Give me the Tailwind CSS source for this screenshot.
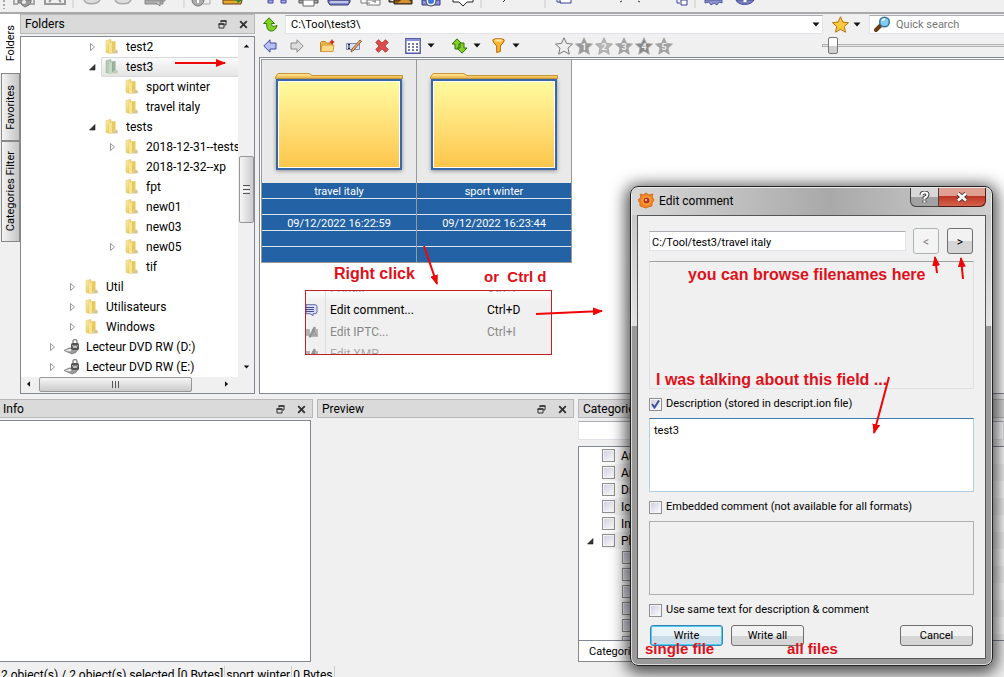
<!DOCTYPE html>
<html lang="en">
  <head>
    <meta charset="UTF-8" />
    <meta name="viewport" content="width=device-width, initial-scale=1.0" />
    <script src="https://cdn.jsdelivr.net/npm/@tailwindcss/browser@4"></script>
    <title>Edit comment</title>
  </head>
  <body class="relative flex h-screen flex-col overflow-hidden bg-[#f0f0f0] font-[Roboto,sans-serif] text-xs text-black">
    <!-- shared symbols -->
    <svg class="absolute size-0">
      <defs>
        <linearGradient id="gold" x1="0" y1="0" x2="1" y2="1">
          <stop offset="0" stop-color="#fff3b4" />
          <stop offset="1" stop-color="#e2b840" />
        </linearGradient>
        <linearGradient id="tab" x1="0" y1="0" x2="0" y2="1">
          <stop offset="0" stop-color="#ffe9a0" />
          <stop offset="1" stop-color="#f0b440" />
        </linearGradient>
        <symbol id="folder" viewBox="0 0 16 16">
          <path d="M2 1.500 7 .5v14l-5-1z" fill="url(#gold)" stroke="#dcc067" stroke-width=".5" />
          <path d="M7 2.500 11.500 2v9L7 14.500z" fill="#e8c95e" />
          <path d="M5 4 8 3v12l-3-1z" fill="#f8e48e" />
          <path d="M8 13.500 12 10.500l2 1.500-.5 2.500H8z" fill="#d6c79a" />
        </symbol>
        <symbol id="folder-open" viewBox="0 0 16 16">
          <path d="M2 1.500 7 .5v14l-5-1z" fill="#b4cdbb" stroke="#8fae9c" stroke-width=".5" />
          <path d="M7 2.500 11.500 2v9L7 14.500z" fill="#95b09b" />
          <path d="M5 4 8 3v12l-3-1z" fill="#c5d8c0" />
          <path d="M8 13.500 12 10.500l2 1.500-.5 2.500H8z" fill="#c3cbb9" />
        </symbol>
        <symbol id="drive" viewBox="0 0 16 16">
          <path d="M0 11.500 5 9h10l-3 4.500-4 1.500z" fill="#9b9b9b" stroke="#666" stroke-width=".6" />
          <path d="M1 11.700 5 10h4l-3 2.500z" fill="#e8e8e8" />
          <rect x="7" y="4" width="8" height="7" rx="1.500" fill="#555" />
          <path d="M9 4V2.500a2 2 0 0 1 4 0V4" fill="none" stroke="#888" stroke-width="1.400" />
          <path d="m8.500 6 1.500 3 1-2.500 1 2.500 1.500-3" fill="none" stroke="#ddd" stroke-width=".9" />
        </symbol>
        <symbol id="closed" viewBox="0 0 10 10">
          <path d="M3.500 1.500v7L7.500 5z" fill="#fff" stroke="#999" />
        </symbol>
        <symbol id="opened" viewBox="0 0 10 10">
          <path d="M8 2.500v5.500H2.500z" fill="#333" stroke="#222" stroke-width=".6" />
        </symbol>
        <symbol id="caret" viewBox="0 0 8 5">
          <path d="M.5.5h7L4 4.500z" fill="#111" />
        </symbol>
        <symbol id="restore" viewBox="0 0 9 9">
          <path d="M3 2.500V1h5v4H6.500M1 4h5v4H1z" fill="none" stroke="#333" />
          <path d="M2.500 1h6M.5 4h6" stroke="#333" stroke-width="1.600" />
        </symbol>
        <symbol id="close" viewBox="0 0 9 9">
          <path d="m1.200 1.200 6.600 6.600M7.800 1.200 1.200 7.800" stroke="#333" stroke-width="1.900" />
        </symbol>
        <symbol id="star" viewBox="0 0 18 18">
          <path d="m9 .8 2.500 5.600 6 .7-4.500 4 1.300 6.100L9 14.100l-5.300 3.100L5 11.100l-4.500-4 6-.7z" />
        </symbol>
        <symbol id="pencil" viewBox="0 0 12 12">
          <path d="M0 3h4v7H0zM6 3h6v8H6z" fill="#b5b5b5" />
          <path d="M3 11 8 1l1.500.8L5 11zM8 5l3 4M7 9h4" fill="#999" stroke="#888" stroke-width=".8" />
        </symbol>
        <marker id="head" viewBox="0 0 10 8" refX="9" refY="4" markerWidth="10" markerHeight="8" markerUnits="userSpaceOnUse" orient="auto">
          <path d="M0 0 10 4 0 8z" fill="#f00606" stroke="none" />
        </marker>
      </defs>
    </svg>

    <!-- main toolbar, scrolled so that only its lower edge is in view -->
    <header class="h-[14px] shrink-0 overflow-hidden border-b border-[#aaa] bg-[#f0f0f0]">
      <div class="h-[13px] border-b border-[#aaa]">
        <svg class="h-[9px] w-[760px]" viewBox="0 0 760 9" fill="none">
          <path d="M4 0v9" stroke="#aaa" stroke-width="2" stroke-dasharray="2 2" />
          <path d="M14 0v4h4M30 4h4V0" stroke="#aaa" stroke-width="2" />
          <path d="M18 3h3l1 2 3 2 4-2 2-3V0H18z" fill="#999" stroke="#777" /><circle cx="24" cy="2" r="2" fill="#eee" />
          <path d="M45 0v4h20V0M49 2l2-2M61 2l-2-2" stroke="#999" stroke-width="2" />
          <path d="M73 0v8M184 0v8M481 0v8M545 0v8M695 0v8" stroke="#ccc" />
          <path d="M84 0c2 5 13 5 16 0M115 0c2 5 14 5 16 0" fill="#ddd" stroke="#aaa" stroke-width="1.500" />
          <path d="M145 0v4h18V0z" fill="#aaa" stroke="#888" /><path d="m156 3 4 3V1h5V0" fill="#ccc" stroke="#888" />
          <circle cx="198" cy="0" r="6" fill="#aaa" stroke="#777" /><path d="M198 0v3" stroke="#fff" stroke-width="2" /><path d="M203 4h7V0" stroke="#aaa" />
          <path d="M223 0v4h18l1-4z" fill="#e9a82c" stroke="#63410e" /><path d="m236 0 2 3 4-3" fill="#218a35" />
          <path d="M268 0v3h5V0zM281 0v3h5V0z" fill="#a4a9ef" stroke="#444a9b" />
          <path d="M299 0v3h19V0z" fill="#aaa" stroke="#555" /><path d="M303 0v6h11V0z" fill="#fff" stroke="#666" />
          <path d="M328 0v2l2 3h18l2-3V0z" fill="#8188cc" stroke="#333970" /><path d="M330 2h18" stroke="#fff" />
          <path d="M361 0v3h9M367 0v5h13V0z" fill="#fff" stroke="#777" /><path d="m371 1 5-1v3z" fill="#999" />
          <path d="M389 0v2h6M394 0v4h18V0z" fill="#965a16" stroke="#222" /><path d="m398 3 3-3h8l2 3z" fill="#d5902f" />
          <path d="M422 0v5h18V0z" fill="#8e94db" stroke="#333976" /><circle cx="431" cy="1" r="5" fill="#fff" stroke="#333976" /><circle cx="431" cy="1" r="3" fill="#3878df" />
          <path d="M453 0v2h6l4 4 4-4h6V0" fill="#fff" stroke="#222" />
          <path d="m505 0-2 2M622 1l-2 1M638 1l2 1" stroke="#333" />
          <path d="M557 0v2h4M560 0v3h11V0" fill="#fff" stroke="#3b419b" />
          <path d="M677 0v3h3M681 0v5h6V0z" fill="#fff" stroke="#3b419b" />
          <path d="M705 0v3l4-1 2 3 3-2 3 2 2-3 3 1V0z" fill="#8e91cf" stroke="#555a9e" />
          <path d="M736 0c2 6 15 6 18 0z" fill="#7a7ec4" stroke="#484c93" /><path d="M745 0v2" stroke="#fff" stroke-width="3" />
        </svg>
      </div>
    </header>

    <main class="flex h-[380px] shrink-0">
      <!-- side tabs -->
      <nav class="flex w-5 shrink-0 flex-col items-end text-[11px]">
        <button class="flex h-[59px] w-5 items-center justify-center bg-white pl-[2px]"><span class="rotate-180 [writing-mode:vertical-rl]">Folders</span></button>
        <button class="flex h-[68px] w-[19px] items-center justify-center border border-[#888] bg-linear-to-r from-[#f4f4f4] to-[#c4c4c4] pl-[2px]"><span class="rotate-180 [writing-mode:vertical-rl]">Favorites</span></button>
        <button class="flex h-[101px] w-[19px] items-center justify-center border border-[#888] bg-linear-to-r from-[#f4f4f4] to-[#c4c4c4] pl-[2px]"><span class="rotate-180 [writing-mode:vertical-rl]">Categories Filter</span></button>
      </nav>

      <!-- folder tree -->
      <section class="flex w-[235px] shrink-0 flex-col gap-[2px]">
        <div class="flex h-5 shrink-0 items-center gap-3 border border-[#b8b8b8] bg-[#dadada] pr-[6px] pl-1">
          <h2 class="grow">Folders</h2>
          <button aria-label="Float"><svg class="size-[9px]"><use href="#restore" /></svg></button>
          <button aria-label="Close"><svg class="size-[9px]"><use href="#close" /></svg></button>
        </div>
        <div class="flex min-h-0 grow flex-col border border-[#828790] bg-white">
          <div class="flex min-h-0 grow">
            <ul id="folder-tree" class="min-w-0 grow overflow-hidden"></ul>
            <div class="flex w-4 shrink-0 flex-col items-center bg-[#f0f0f0] pt-[7px] pb-2">
              <svg class="h-[4px] w-[7px] rotate-180"><use href="#caret" /></svg>
              <div class="mt-[108px] flex h-[67px] w-[15px] flex-col items-center justify-center gap-px rounded-xs border border-[#979797] bg-linear-to-r from-[#f6f6f6] to-[#cbcbcb]">
                <i class="h-px w-[7px] bg-[#555]"></i><i class="h-px w-[7px] bg-white"></i><i class="h-px w-[7px] bg-[#555]"></i><i class="h-px w-[7px] bg-white"></i><i class="h-px w-[7px] bg-[#555]"></i>
              </div>
              <svg class="mt-auto h-[4px] w-[7px]"><use href="#caret" /></svg>
            </div>
          </div>
          <div class="flex h-4 shrink-0 items-start bg-[#f0f0f0] pr-6 pl-1">
            <svg class="mt-[5px] h-[4px] w-[7px] rotate-90"><use href="#caret" /></svg>
            <div class="ml-[7px] flex h-[15px] w-[153px] items-center justify-center gap-[2px] rounded-xs border border-[#979797] bg-linear-to-b from-[#f6f6f6] to-[#cbcbcb]">
              <i class="h-[7px] w-px bg-[#555]"></i><i class="h-[7px] w-px bg-[#555]"></i><i class="h-[7px] w-px bg-[#555]"></i>
            </div>
            <svg class="mt-[5px] ml-auto h-[4px] w-[7px] -rotate-90"><use href="#caret" /></svg>
          </div>
        </div>
      </section>

      <!-- browser -->
      <section class="ml-1 flex min-w-0 grow flex-col">
        <div class="flex h-5 shrink-0 items-center">
          <button class="ml-1 shrink-0" aria-label="Up"><svg class="size-[15px]" viewBox="0 0 15 15"><path d="M.5 6.500 6 .8l5.500 5.700H8.500c0 3 2 3.500 5.500 2-1 4-3.500 5.700-6 5.500-3.500-.3-4.500-3-4.300-7.500z" fill="#7ed321" stroke="#35780c" /></svg></button>
          <div class="ml-[7px] flex h-[19px] min-w-0 grow items-center border border-[#e2e3ea] border-t-[#abadb3] bg-white pr-[2px]">
            <input class="min-w-0 grow pt-[2px] pl-[5px] text-[11px] outline-none" aria-label="Path" value="C:\Tool\test3\" />
            <button aria-label="History"><svg class="h-[5px] w-2"><use href="#caret" /></svg></button>
          </div>
          <button class="ml-[9px] flex shrink-0 items-center gap-1" aria-label="Favorites">
            <svg class="size-[17px]" fill="#ffc93c" stroke="#b36b0b" viewBox="0 0 18 18"><use href="#star" /></svg>
            <svg class="h-[5px] w-2"><use href="#caret" /></svg>
          </button>
          <div class="ml-2 flex h-[19px] w-[135px] shrink-0 items-center gap-[5px] border border-r-0 border-[#e2e3ea] border-t-[#abadb3] bg-white pl-1">
            <svg class="size-[17px] shrink-0" viewBox="0 0 17 17"><path d="m2 14 5-5" stroke="#6b3b16" stroke-width="4" stroke-linecap="round" /><circle cx="10.500" cy="6" r="4.800" fill="#80cdf4" stroke="#38729c" stroke-width="1.500" /><path d="M8 5q1-2 3-2" stroke="#fff" stroke-width="1.500" fill="none" /></svg>
            <input class="min-w-0 grow pt-[2px] text-[11px] outline-none placeholder:text-[#777]" aria-label="Quick search" placeholder="Quick search" />
          </div>
        </div>

        <div class="flex h-[23px] shrink-0 items-center pl-1">
          <button aria-label="Back"><svg class="size-[14px]" viewBox="0 0 14 14"><path d="M.8 7 7 .8V4h6v6H7v3.200z" fill="#b8bff3" stroke="#4349a2" /></svg></button>
          <button class="ml-[13px]" aria-label="Forward"><svg class="size-[14px]" viewBox="0 0 14 14"><path d="M13.200 7 7 .8V4H1v6h6v3.200z" fill="#ddd" stroke="#888" /></svg></button>
          <button class="ml-4" aria-label="New folder"><svg class="h-[14px] w-[15px]" viewBox="0 0 15 14"><path d="M.5 12.500v-9l1-1h4l1 1.500h6v8.500z" fill="#f2b64a" stroke="#c08529" /><path d="M1 12.500 2 6h12l-1 6.500z" fill="#ffda87" stroke="#d49a3b" /><path d="m12 0 1 2 2 1-2 1-1 2-1-2-2-1 2-1z" fill="#d3261b" /></svg></button>
          <button class="ml-[11px]" aria-label="Rename"><svg class="h-[14px] w-4" viewBox="0 0 16 14"><path d="M.5 4.500h13v6H.5z" fill="#dce1fa" stroke="#8388bd" /><path d="M3 5.500v4M2 5.500h2M2 9.500h2" stroke="#222" /><path d="m5 13 1-3 8-9 1.500 1.200L8 11z" fill="#efad5b" stroke="#784819" stroke-width=".8" /></svg></button>
          <button class="ml-[13px]" aria-label="Delete"><svg class="size-[14px]" viewBox="0 0 14 14"><path d="m3.500.8 3.500 3.400L10.500.8l2.700 2.700L9.800 7l3.400 3.500-2.700 2.700L7 9.800l-3.500 3.400-2.700-2.700L4.200 7 .8 3.500z" fill="#df4b4b" stroke="#b23a3a" /></svg></button>
          <button class="ml-4 flex items-center gap-[6px]" aria-label="View"><svg class="size-4" viewBox="0 0 16 16"><path d="M.8.8h14.400v14.400H.8z" fill="#fff" stroke="#555aa7" stroke-width="1.400" /><path d="M1 2h14" stroke="#8c91d8" stroke-width="2" /><path d="M3 6h10M3 9h10M3 12h10" stroke="#4a4e8f" stroke-width="1.600" stroke-dasharray="2 2" /></svg><svg class="h-[5px] w-2"><use href="#caret" /></svg></button>
          <button class="ml-4 flex items-center gap-[5px]" aria-label="Sort"><svg class="h-4 w-[17px]" viewBox="0 0 17 16"><path d="M6 .8 11 6H8v5H4V6H1z" fill="#80d122" stroke="#356f10" /><path d="M11 15.200 16 10h-3V5H9v5H6z" fill="#80d122" stroke="#356f10" /></svg><svg class="h-[5px] w-2"><use href="#caret" /></svg></button>
          <button class="ml-[11px] flex items-center gap-[7px]" aria-label="Filter"><svg class="h-[15px] w-[13px]" viewBox="0 0 13 15"><path d="M.7 2q0-1.300 5.800-1.300T12.300 2q0 2-4 6v5.500l-3.600 1V8Q.7 4 .7 2z" fill="#ffb62e" stroke="#b36410" /><ellipse cx="6.500" cy="2.400" rx="4.200" ry="1.200" fill="#ffe39b" /></svg><svg class="h-[5px] w-2"><use href="#caret" /></svg></button>
          <div id="ratings" class="ml-[35px] flex gap-[2px]"></div>
          <div class="relative ml-auto flex h-[18px] w-[182px] items-center">
            <i class="h-[3px] w-full border border-r-0 border-[#b0b0b0] bg-[#e7e7e7]"></i>
            <input type="range" class="absolute inset-0 h-full w-full opacity-0" aria-label="Thumbnail size" value="3" />
            <i class="pointer-events-none absolute left-[6px] h-[17px] w-[10px] rounded-xs border border-[#777] bg-linear-to-b from-white from-50% to-[#d0d0d0] to-50%"></i>
          </div>
        </div>

        <div class="min-h-0 grow border border-r-0 border-[#828790] bg-white pt-px pl-px">
          <div id="thumbs" class="flex border-t border-l border-[#999]"></div>
        </div>
      </section>
    </main>

    <!-- lower panels -->
    <div class="mt-[5px] flex min-h-0 grow gap-1">
      <section class="flex w-[313px] shrink-0 flex-col gap-[2px]">
        <div class="flex h-[19px] shrink-0 items-center gap-3 border border-l-0 border-[#b8b8b8] bg-[#dadada] pt-px pr-[6px] pl-[3px]">
          <h2 class="grow">Info</h2>
          <button aria-label="Float"><svg class="size-[9px]"><use href="#restore" /></svg></button>
          <button aria-label="Close"><svg class="size-[9px]"><use href="#close" /></svg></button>
        </div>
        <div class="mr-[2px] grow border border-l-0 border-[#828790] bg-white"></div>
      </section>
      <section class="w-[257px] shrink-0">
        <div class="flex h-[19px] items-center gap-3 border border-[#b8b8b8] bg-[#dadada] pt-px pr-[6px] pl-1">
          <h2 class="grow">Preview</h2>
          <button aria-label="Float"><svg class="size-[9px]"><use href="#restore" /></svg></button>
          <button aria-label="Close"><svg class="size-[9px]"><use href="#close" /></svg></button>
        </div>
      </section>
      <section class="flex min-w-0 grow flex-col">
        <h2 class="flex h-[19px] shrink-0 items-center border border-r-0 border-[#b8b8b8] bg-[#dadada] pt-px pl-1">Categories</h2>
        <input class="mt-[3px] h-[19px] shrink-0 border border-[#e2e3ea] border-t-[#abadb3] bg-white outline-none" aria-label="Filter categories" />
        <ul id="categories" class="mt-[6px] min-h-0 grow overflow-hidden border border-r-0 border-[#828790] bg-white"></ul>
        <button class="flex h-[21px] w-24 shrink-0 items-center border border-t-0 border-[#888] bg-white pt-[2px] pl-[10px] text-[11px]">Categories</button>
      </section>
    </div>

    <footer class="mt-1 flex h-[11px] shrink-0 items-start overflow-hidden text-xs leading-[18px] whitespace-nowrap">
      <span class="border-r border-[#ccc] pr-px pl-px">2 object(s) / 2 object(s) selected [0 Bytes]</span>
      <span class="border-r border-[#ccc] px-px">sport winter</span>
      <span class="border-r border-[#ccc] px-px">0 Bytes</span>
    </footer>

    <!-- context menu excerpt -->
    <div class="absolute top-[290px] left-[305px] h-[65px] w-[247px] overflow-hidden border border-[#c5202a] bg-linear-to-b from-white via-[#f0f0f0] via-15% to-[#f0f0f0]">
      <div class="-mt-[14px] grid grid-cols-[19px_162px_1fr] text-xs leading-[22px]">
        <svg class="size-3 self-center" viewBox="0 0 12 12"><path d="M0 4h10v5H0z" fill="#aaa" /></svg>
        <span class="border-l border-[#dcdcdc] pl-1 text-[#aaa]">Print...</span><span class="text-[#aaa]">Ctrl+P</span>
        <svg class="size-3 self-center" viewBox="0 0 12 12"><path d="M0 .7h9q2 0 2 2v5q0 2-2 2H7v2L4 9.700H0z" fill="#d9dcfa" stroke="#6268a7" /><path d="M0 3.500h8M0 5.500h8M0 7.500h8" stroke="#454b87" /></svg>
        <span class="border-l border-[#dcdcdc] pl-1">Edit comment...</span><span>Ctrl+D</span>
        <svg class="size-3 self-center"><use href="#pencil" /></svg>
        <span class="border-l border-[#dcdcdc] pl-1 text-[#888]">Edit IPTC...</span><span class="text-[#888]">Ctrl+I</span>
        <svg class="size-3 self-center"><use href="#pencil" /></svg>
        <span class="border-l border-[#dcdcdc] pl-1 text-[#aaa]">Edit XMP...</span><span></span>
      </div>
    </div>

    <!-- dialog -->
    <div role="dialog" aria-labelledby="dialog-title" class="absolute top-[186px] left-[630px] w-[363px] rounded-lg border border-[#222] bg-linear-to-b from-[#c2c2c2] from-0% via-[#e2e2e2] via-29% to-[#999] to-29% px-[6px] pb-[6px] text-[11px] shadow-[0_3px_16px_4px_rgba(0,0,0,0.7),inset_0_0_0_1px_rgba(255,255,255,0.65)]">
      <div class="-mx-[5px] mt-px flex h-[27px] items-start rounded-t-lg bg-linear-to-r from-[#d8d8d8] via-[#a9a9a9] via-55% to-[#cfcfcf] pl-[6px] pr-[5px]">
        <svg class="mt-[4px] size-[17px]" viewBox="0 0 17 17"><path d="m2 2 3 1 3-2 3 2 4-1-1 3 2 3-2 3v3l-4 1-2 1-3-1-3-1v-3L0 8l3-3z" fill="#ef8425" stroke="#d9711f" /><circle cx="8.500" cy="8.500" r="4.500" fill="#ffa53c" /><circle cx="8.500" cy="8.500" r="3" fill="#b9331b" /><circle cx="8" cy="8" r="1" fill="#fff0cf" /></svg>
        <h1 id="dialog-title" class="mt-[5px] ml-1 grow text-xs leading-4">Edit comment</h1>
        <button aria-label="Help" class="flex h-[19px] w-[29px] items-center justify-center rounded-bl-md border border-t-0 border-[#444] bg-linear-to-b from-[#d8d8d8] from-50% to-[#a2a2a2] to-50%">
          <svg class="h-[13px] w-[11px]" viewBox="0 0 11 13" fill="none" stroke-width="2"><path d="M2.500 4q0-2.500 3-2.500t3 2.300q0 1.500-3 3v1.200M5.500 9.500v2" stroke="#444" stroke-width="4" /><path d="M2.500 4q0-2.500 3-2.500t3 2.300q0 1.500-3 3v1.200M5.500 9.500v2" stroke="#fff" /></svg>
        </button>
        <button aria-label="Close" class="flex h-[19px] w-[47px] items-center justify-center rounded-br-md border border-t-0 border-l-0 border-[#4f1a14] bg-linear-to-b from-[#dfa091] from-45% via-[#bd3322] via-45% to-[#d4624b]">
          <svg class="h-[10px] w-3" viewBox="0 0 12 10"><path d="m2 1.500 8 7M10 1.500l-8 7" stroke="#5b3431" stroke-width="4.600" /><path d="m2 1.500 8 7M10 1.500l-8 7" stroke="#fff" stroke-width="2.700" /></svg>
        </button>
      </div>
      <form class="flex flex-col border border-[#555] bg-[#f0f0f0] px-[11px] py-3">
        <div class="mr-px flex h-[26px] items-center">
          <input class="mr-[7px] h-5 min-w-0 grow border border-[#e2e3ea] border-t-[#abadb3] bg-white px-[2px] pt-[2px] outline-none" aria-label="File name" value="C:/Tool/test3/travel italy" />
          <button type="button" disabled class="mr-2 size-[26px] rounded-[3px] border border-[#adb2b5] bg-[#f4f4f4] pt-[2px] text-xs text-[#838383]">&lt;</button>
          <button type="button" class="size-[26px] rounded-[3px] border border-[#707070] bg-linear-to-b from-[#f2f2f2] from-50% to-[#d5d5d5] to-50% pt-[2px] text-xs">&gt;</button>
        </div>
        <div class="mt-[7px] h-32 border border-[#dfe0e4] border-t-[#a0a0a0]"></div>
        <label class="mt-[7px] flex h-4 items-center gap-1"><input type="checkbox" checked class="peer size-[13px] appearance-none border border-[#8e8f8f] bg-[#f6f6f6] bg-linear-to-br from-[#ccd] to-white shadow-[inset_0_0_0_1px_#f4f4f4]" /><svg class="pointer-events-none -ml-[15px] mr-[2px] hidden size-[9px] peer-checked:block" viewBox="0 0 9 9"><path d="m1 4 2.500 3.500L8 .5" fill="none" stroke="#3c4f97" stroke-width="2" /></svg><span class="pt-px">Description (stored in descript.ion file)</span></label>
        <textarea class="mt-[6px] h-[74px] resize-none border border-[#b0cfe4] border-t-[#3d7bad] bg-white px-1 py-[5px] outline-none" aria-label="Description">test3</textarea>
        <label class="mt-[7px] flex h-4 items-center gap-1"><input type="checkbox" class="size-[13px] appearance-none border border-[#8e8f8f] bg-linear-to-br from-[#ccd] to-white shadow-[inset_0_0_0_1px_#f4f4f4]" /><span class="pt-px">Embedded comment (not available for all formats)</span></label>
        <textarea disabled class="mt-[6px] h-[74px] resize-none border border-[#afafaf] bg-[#f0f0f0]" aria-label="Embedded comment"></textarea>
        <label class="mt-[7px] flex h-4 items-center gap-1"><input type="checkbox" class="size-[13px] appearance-none border border-[#8e8f8f] bg-linear-to-br from-[#ccd] to-white shadow-[inset_0_0_0_1px_#f4f4f4]" /><span class="pt-px">Use same text for description &amp; comment</span></label>
        <div class="mt-[7px] flex h-[21px] gap-2 px-px">
          <button type="button" class="w-[73px] rounded-[3px] border border-[#3c7fb1] bg-linear-to-b from-[#eaf3f8] from-50% to-[#c9dce8] to-50% pt-[2px] shadow-[inset_0_0_0_1px_#48d1f5]">Write</button>
          <button type="button" class="w-[73px] rounded-[3px] border border-[#707070] bg-linear-to-b from-[#f2f2f2] from-50% to-[#d5d5d5] to-50% pt-[2px]">Write all</button>
          <button type="button" class="ml-auto w-[73px] rounded-[3px] border border-[#707070] bg-linear-to-b from-[#f2f2f2] from-50% to-[#d5d5d5] to-50% pt-[2px]">Cancel</button>
        </div>
      </form>
    </div>

    <!-- red notes drawn over everything -->
    <div class="pointer-events-none absolute inset-0 font-['Liberation_Sans',Arial,sans-serif] text-base leading-4 font-bold whitespace-pre text-[#e0101a]">
      <svg class="absolute inset-0 h-full w-full" stroke="#f00606" stroke-width="2">
        <path d="M175 63H225" marker-end="url(#head)" />
        <path d="M424 246 437 284" marker-end="url(#head)" />
        <path d="M536 314 602 311" marker-end="url(#head)" />
        <path d="M937 273 935 257" marker-end="url(#head)" />
        <path d="M963 279 961 258" marker-end="url(#head)" />
        <path d="M889 377 874 433" marker-end="url(#head)" />
      </svg>
      <p class="absolute top-[266px] left-[334px]">Right click</p>
      <p class="absolute top-[269px] left-[484px] text-[15px]">or  Ctrl d</p>
      <p class="absolute top-[267px] left-[688px]">you can browse filenames here</p>
      <p class="absolute top-[372px] left-[656px]">I was talking about this field ...</p>
      <p class="absolute top-[641px] left-[645px] text-[15px]">single file</p>
      <p class="absolute top-[641px] left-[787px] text-[15px]">all files</p>
    </div>

    <script>
      // [label, level, arrow, icon]
      const folders = [
        ["test2", 3, "closed", "folder"],
        ["test3", 3, "opened", "folder-open"],
        ["sport winter", 4, "", "folder"],
        ["travel italy", 4, "", "folder"],
        ["tests", 3, "opened", "folder"],
        ["2018-12-31--tests", 4, "closed", "folder"],
        ["2018-12-32--xp", 4, "", "folder"],
        ["fpt", 4, "", "folder"],
        ["new01", 4, "", "folder"],
        ["new03", 4, "", "folder"],
        ["new05", 4, "closed", "folder"],
        ["tif", 4, "", "folder"],
        ["Util", 2, "closed", "folder"],
        ["Utilisateurs", 2, "closed", "folder"],
        ["Windows", 2, "closed", "folder"],
        ["Lecteur DVD RW (D:)", 1, "closed", "drive"],
        ["Lecteur DVD RW (E:)", 1, "closed", "drive"],
      ];

      document.getElementById("folder-tree").innerHTML = folders
        .map(([label, level, arrow, icon]) => {
          const selected =
            icon === "folder-open"
              ? "rounded-l-xs border border-r-0 border-[#d9d9d9] bg-linear-to-b from-[#fafafa] to-[#e5e5e5]"
              : "border border-transparent";
          return `
            <li class="flex h-5 items-center whitespace-nowrap" style="padding-left: ${level * 20 + 6}px">
              <svg class="mr-1 size-[10px] shrink-0">${arrow ? `<use href="#${arrow}" />` : ""}</svg>
              <span class="flex h-5 grow items-center gap-[6px] pl-[2px] ${selected}">
                <svg class="size-4 shrink-0"><use href="#${icon}" /></svg>${label}
              </span>
            </li>`;
        })
        .join("");

      const thumbs = [
        ["travel italy", "09/12/2022 16:22:59"],
        ["sport winter", "09/12/2022 16:23:44"],
      ];

      document.getElementById("thumbs").innerHTML = thumbs
        .map(
          ([name, date]) => `
            <figure class="w-[155px] border-r border-b border-[#999] bg-[#e9e9e9] text-center text-[11px] text-white">
              <div class="mx-[13px] my-[13px] flex flex-col">
                <svg class="h-[6px] w-full" viewBox="0 0 128 6" preserveAspectRatio="none">
                  <path d="M.5 6V4L3 .5h31L37 2.500h90.500V6z" fill="url(#tab)" stroke="#c9962f" />
                </svg>
                <div class="mx-px h-[91px] border-2 border-[#3767a5] bg-white p-px shadow-[0_1px_4px_rgba(0,0,0,0.4)]">
                  <div class="h-full bg-linear-to-b from-[#fffa9e] to-[#fdc64b]"></div>
                </div>
              </div>
              <figcaption class="divide-y divide-[#dbe6f0] bg-[#2362a5] leading-[17px]">
                <p class="h-4">${name}</p>
                <p class="h-4"></p>
                <p class="h-4">${date}</p>
                <p class="h-4"></p>
                <p class="h-[15px]"></p>
              </figcaption>
            </figure>`
        )
        .join("");

      const shades = ["#eee", "#999", "#b5b5b5", "#a2a2a2", "#888", "#a2a2a2"];
      document.getElementById("ratings").innerHTML = shades
        .map(
          (shade, i) => `
            <button aria-label="Rating ${i}">
              <svg class="size-[18px]" viewBox="0 0 18 18" fill="${shade}" stroke="${i ? "#aaa" : "#777"}">
                <use href="#star" />
                <text x="9" y="13" text-anchor="middle" font-size="9" font-weight="bold" fill="#eee" stroke="none">${i || ""}</text>
              </svg>
            </button>`
        )
        .join("");

      const categories = ["Audio", "Archives", "Drawings", "Icons", "Internet", "Photographs", "", "", "", "", "", ""];
      document.getElementById("categories").innerHTML = categories
        .map(
          (name, i) => `
            <li class="flex h-[17px] items-center pl-[6px]">
              <svg class="mr-[7px] size-[10px] shrink-0">${name === "Photographs" ? '<use href="#opened" />' : ""}</svg>
              <label class="flex h-[17px] grow items-center gap-[6px] ${i % 2 ? "bg-[#f5f5f5]" : ""} ${name ? "" : "ml-5"}">
                <input type="checkbox" class="size-[13px] appearance-none border border-[#8e8f8f] bg-linear-to-br from-[#ccd] to-white shadow-[inset_0_0_0_1px_#f4f4f4]" />${name}
              </label>
            </li>`
        )
        .join("");
    </script>
  </body>
</html>
